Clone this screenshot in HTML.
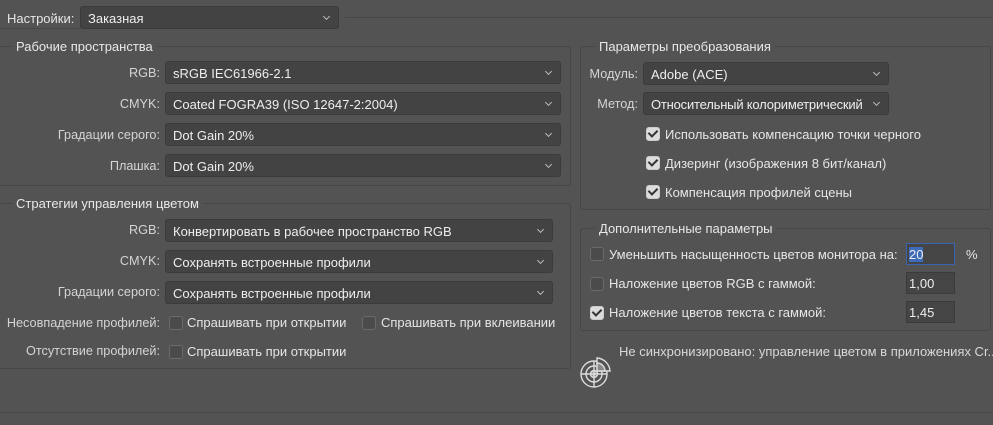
<!DOCTYPE html>
<html><head><meta charset="utf-8"><style>
*{box-sizing:border-box;margin:0;padding:0}
body{width:993px;height:425px;background:#535353;font-family:"Liberation Sans",sans-serif;font-size:13px;color:#e6e6e6;position:relative;overflow:hidden}
.a{position:absolute;white-space:nowrap}
.box{position:absolute;border:1px solid #464646;border-radius:3px}
.lg{position:absolute;background:#535353;padding:0 4px;color:#e8e8e8}
.sel{position:absolute;height:23px;background:#434343;border:1px solid #3b3b3b;border-radius:3px;padding:4px 7px;color:#eee;overflow:hidden}
.sel:after{content:"";position:absolute;right:9px;top:7px;width:4px;height:4px;border-right:1px solid #bbb;border-bottom:1px solid #bbb;transform:rotate(45deg)}
.lb{position:absolute;text-align:right;color:#d4d4d4;font-size:12.7px}
.cb{position:absolute;width:14px;height:14px;border:1px solid #6a6a6a;background:#4b4b4b;border-radius:3px}
.ck{background:#dcdcdc;border-color:#ccc}
.ck:after{content:"";position:absolute;left:3px;top:0px;width:4px;height:7px;border-right:2px solid #333;border-bottom:2px solid #333;transform:rotate(45deg)}
.inp{position:absolute;width:49px;height:22px;background:#454545;border:1px solid #3b3b3b;padding:3px 2px;color:#eee}
</style></head><body>
<div class="a" style="left:7px;top:11px">Настройки:</div>
<div class="sel" style="left:80px;top:6px;width:259px">Заказная</div>
<div class="a" style="left:345px;top:17px;width:648px;border-top:1px solid #464646"></div>
<div class="a" style="left:0;top:28px;width:80px;border-top:1px solid #464646"></div>

<div class="box" style="left:-3px;top:46px;width:574px;height:140px"></div>
<div class="lg" style="left:12px;top:39px">Рабочие пространства</div>
<div class="lb" style="left:0;width:160px;top:66px">RGB:</div>
<div class="sel" style="left:165px;top:61px;width:396px">sRGB IEC61966-2.1</div>
<div class="lb" style="left:0;width:160px;top:97px">CMYK:</div>
<div class="sel" style="left:165px;top:92px;width:396px">Coated FOGRA39 (ISO 12647-2:2004)</div>
<div class="lb" style="left:0;width:160px;top:128px">Градации серого:</div>
<div class="sel" style="left:165px;top:123px;width:396px">Dot Gain 20%</div>
<div class="lb" style="left:0;width:160px;top:159px">Плашка:</div>
<div class="sel" style="left:165px;top:154px;width:396px">Dot Gain 20%</div>

<div class="box" style="left:-3px;top:203px;width:574px;height:166px"></div>
<div class="lg" style="left:12px;top:196px">Стратегии управления цветом</div>
<div class="lb" style="left:0;width:160px;top:223px">RGB:</div>
<div class="sel" style="left:165px;top:219px;width:388px">Конвертировать в рабочее пространство RGB</div>
<div class="lb" style="left:0;width:160px;top:254px">CMYK:</div>
<div class="sel" style="left:165px;top:250px;width:388px">Сохранять встроенные профили</div>
<div class="lb" style="left:0;width:160px;top:285px">Градации серого:</div>
<div class="sel" style="left:165px;top:281px;width:388px">Сохранять встроенные профили</div>
<div class="lb" style="left:0;width:160px;top:316px">Несовпадение профилей:</div>
<div class="cb" style="left:169px;top:316px"></div><div class="a" style="left:187px;top:315px">Спрашивать при открытии</div>
<div class="cb" style="left:362px;top:316px"></div><div class="a" style="left:381px;top:315px">Спрашивать при вклеивании</div>
<div class="lb" style="left:0;width:160px;top:344px">Отсутствие профилей:</div>
<div class="cb" style="left:169px;top:345px"></div><div class="a" style="left:187px;top:344px">Спрашивать при открытии</div>

<div class="box" style="left:580px;top:46px;width:411px;height:164px"></div>
<div class="lg" style="left:595px;top:39px">Параметры преобразования</div>
<div class="lb" style="left:580px;width:58px;top:67px">Модуль:</div>
<div class="sel" style="left:643px;top:62px;width:246px">Adobe (ACE)</div>
<div class="lb" style="left:580px;width:58px;top:97px">Метод:</div>
<div class="sel" style="left:643px;top:92px;width:246px;letter-spacing:-0.2px">Относительный колориметрический</div>
<div class="cb ck" style="left:646px;top:127px"></div><div class="a" style="left:665px;top:127px">Использовать компенсацию точки черного</div>
<div class="cb ck" style="left:646px;top:156px"></div><div class="a" style="left:665px;top:156px">Дизеринг (изображения 8 бит/канал)</div>
<div class="cb ck" style="left:646px;top:185px"></div><div class="a" style="left:665px;top:185px">Компенсация профилей сцены</div>

<div class="box" style="left:580px;top:228px;width:411px;height:103px"></div>
<div class="lg" style="left:595px;top:221px">Дополнительные параметры</div>
<div class="cb" style="left:590px;top:247px"></div><div class="a" style="left:609px;top:247px">Уменьшить насыщенность цветов монитора на:</div>
<div class="inp" style="left:906px;top:243px;border-color:#3a64b0"><span style="background:#3d6bb8">20</span></div>
<div class="a" style="left:966px;top:247px">%</div>
<div class="cb" style="left:590px;top:277px"></div><div class="a" style="left:609px;top:276px">Наложение цветов RGB с гаммой:</div>
<div class="inp" style="left:906px;top:272px">1,00</div>
<div class="cb ck" style="left:590px;top:306px"></div><div class="a" style="left:609px;top:305px">Наложение цветов текста с гаммой:</div>
<div class="inp" style="left:906px;top:301px">1,45</div>

<div class="a" style="left:619px;top:344px;color:#d8d8d8">Не синхронизировано: управление цветом в приложениях Cr...</div>
<svg class="a" style="left:578px;top:355px" width="34" height="34" viewBox="0 0 34 34" fill="none" stroke="#ddd" stroke-width="1.4">
<circle cx="16" cy="19" r="13"/><circle cx="16" cy="19" r="8"/><circle cx="16" cy="19" r="3.5" fill="#999"/>
<path d="M3 19H29M16 6V32"/>
<path d="M19 3A14 14 0 0 1 32 16H19Z" fill="#535353"/><path d="M19 8A8 8 0 0 1 27 16H19Z" fill="#888"/>
</svg>
<div class="a" style="left:0;top:412px;width:993px;border-top:1px solid #464646"></div>
</body></html>
